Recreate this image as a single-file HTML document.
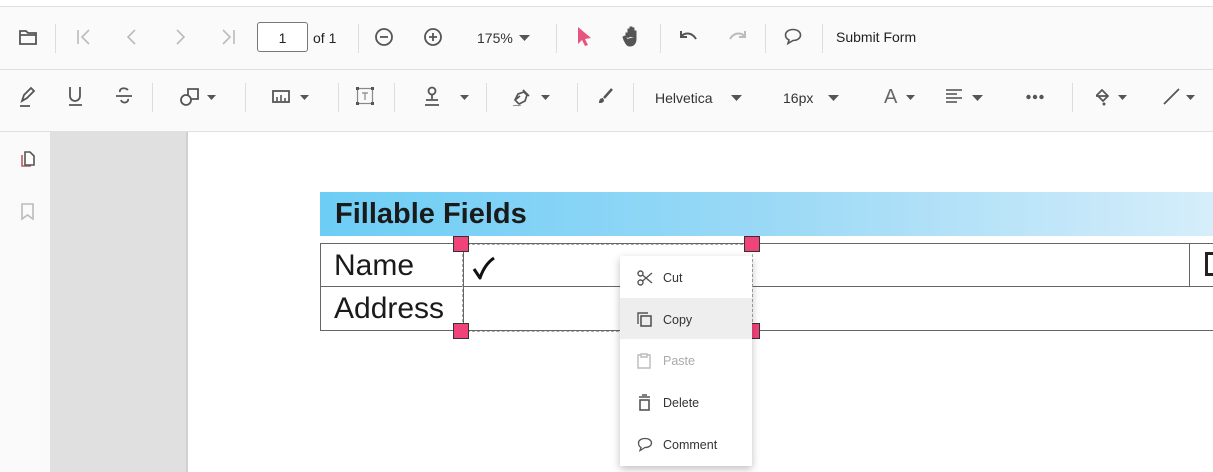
<!DOCTYPE html>
<html><head><style>
*{margin:0;padding:0;box-sizing:border-box}
body{width:1213px;height:472px;overflow:hidden;background:#fff;font-family:"Liberation Sans",sans-serif;position:relative}
.a{position:absolute}
.tb{background:#fafafa;left:0;width:1213px}
.sep{position:absolute;width:1px;background:#ddd}
.t{position:absolute;font-size:14px;color:#333}
svg{position:absolute;overflow:visible}
.mi{position:absolute;left:0;width:132px;height:41px;font-size:12.5px;color:#333}
.mi span{position:absolute;left:43px;top:15px}
</style></head><body>
<div class="a" style="top:0;left:0;width:1213px;height:6px;background:#fff"></div>
<div class="a tb" style="top:6px;height:64px;border-top:1px solid #e0e0e0;border-bottom:1px solid #e0e0e0"></div>
<div class="a tb" style="top:70px;height:62px;border-bottom:1px solid #e0e0e0"></div>
<!-- toolbar 1 -->
<svg style="left:18px;top:28px" width="20" height="18"><path d="M2 3h6l2 2h8v11H2z M2 7h16" fill="none" stroke="#555" stroke-width="1.8"/></svg>
<div class="sep" style="left:55px;top:24px;height:29px"></div>
<svg style="left:76px;top:29px" width="16" height="16"><path d="M2 1v14 M13 1l-7 7 7 7" fill="none" stroke="#bbb" stroke-width="1.6"/></svg>
<svg style="left:124px;top:29px" width="16" height="16"><path d="M11 1l-7 7 7 7" fill="none" stroke="#bbb" stroke-width="1.6"/></svg>
<svg style="left:172px;top:29px" width="16" height="16"><path d="M5 1l7 7-7 7" fill="none" stroke="#bbb" stroke-width="1.6"/></svg>
<svg style="left:220px;top:29px" width="16" height="16"><path d="M3 1l7 7-7 7 M14 1v14" fill="none" stroke="#bbb" stroke-width="1.6"/></svg>
<div class="a" style="left:257px;top:22px;width:51px;height:30px;border:1px solid #777;border-radius:3px;background:#fff;font-size:14px;text-align:center;line-height:30px;color:#222">1</div>
<div class="t" style="left:313px;top:30px;color:#222">of 1</div>
<div class="sep" style="left:358px;top:24px;height:29px"></div>
<svg style="left:374px;top:27px" width="20" height="20"><circle cx="10" cy="10" r="8" fill="none" stroke="#555" stroke-width="1.8"/><path d="M6 10h8" stroke="#555" stroke-width="1.8"/></svg>
<svg style="left:423px;top:27px" width="20" height="20"><circle cx="10" cy="10" r="8" fill="none" stroke="#555" stroke-width="1.8"/><path d="M6 10h8M10 6v8" stroke="#555" stroke-width="1.8"/></svg>
<div class="t" style="left:477px;top:30px">175%</div>
<svg style="left:519px;top:35px" width="12" height="7"><path d="M0 0h11l-5.5 6z" fill="#555"/></svg>
<div class="sep" style="left:556px;top:24px;height:29px"></div>
<svg style="left:577px;top:27px" width="16" height="20"><path d="M1 0l13 11-6 1 3 6-3 1-3-6-4 4z" fill="#e8547e"/></svg>
<svg style="left:623px;top:26px" width="20" height="22"><path d="M3 11v-4h2v5 M5 12V3h2v8 M7 11V1h2v10 M9 11V2h2v9 M11 11V5h2v8c0 5-3 7-6 7-3 0-4-2-6-6l-1-3 2-1 2 3" fill="#555" stroke="#555" stroke-width="1"/></svg>
<div class="sep" style="left:660px;top:24px;height:29px"></div>
<svg style="left:679px;top:30px" width="20" height="14"><path d="M2 1v6h6 M2 7c3-5 11-5 15 2" fill="none" stroke="#555" stroke-width="2"/></svg>
<svg style="left:727px;top:30px" width="20" height="14"><path d="M18 1v6h-6 M18 7c-3-5-11-5-15 2" fill="none" stroke="#bbb" stroke-width="2"/></svg>
<div class="sep" style="left:765px;top:24px;height:29px"></div>
<svg style="left:784px;top:28px" width="18" height="17"><path d="M9 1.5c4.5 0 7.5 2.5 7.5 5.5s-3 5.5-7.5 5.5l-5 3 1-3.5C3 11 1.5 9 1.5 7 1.5 4 4.5 1.5 9 1.5z" fill="none" stroke="#555" stroke-width="1.6"/></svg>
<div class="sep" style="left:822px;top:24px;height:29px"></div>
<div class="t" style="left:836px;top:29px;color:#222">Submit Form</div>
<!-- toolbar 2 -->
<svg style="left:19px;top:87px" width="18" height="20"><path d="M3 14l2-6 7-7 3 3-7 7z M1 19h10" fill="none" stroke="#555" stroke-width="1.8"/></svg>
<svg style="left:67px;top:86px" width="18" height="20"><path d="M3 1v9a5 5 0 0 0 10 0V1 M2 19h13" fill="none" stroke="#555" stroke-width="1.8"/></svg>
<svg style="left:115px;top:87px" width="18" height="20"><path d="M13 3C10 0 4 1 5 5 M1 9h16 M6 13c1 4 8 3 7-1" fill="none" stroke="#555" stroke-width="1.8"/></svg>
<div class="sep" style="left:152px;top:83px;height:29px"></div>
<svg style="left:180px;top:87px" width="20" height="20"><circle cx="6" cy="13" r="5" fill="none" stroke="#555" stroke-width="1.8"/><path d="M8 8V2h10v10h-7" fill="none" stroke="#555" stroke-width="1.8"/></svg>
<svg style="left:207px;top:95px" width="10" height="6"><path d="M0 0h9l-4.5 5z" fill="#555"/></svg>
<div class="sep" style="left:245px;top:83px;height:29px"></div>
<svg style="left:272px;top:90px" width="20" height="14"><rect x="1" y="1" width="16" height="11" fill="none" stroke="#555" stroke-width="1.8"/><path d="M5 11V7M9 11V5M13 11V8" stroke="#555" stroke-width="1.6"/></svg>
<svg style="left:300px;top:95px" width="10" height="6"><path d="M0 0h9l-4.5 5z" fill="#555"/></svg>
<div class="sep" style="left:338px;top:83px;height:29px"></div>
<svg style="left:356px;top:87px" width="20" height="20"><rect x="1.5" y="1.5" width="15" height="15" fill="none" stroke="#888" stroke-width="1.2"/><path d="M6 6h6M9 6v7" stroke="#888" stroke-width="1.2"/><g fill="#555"><rect x="0" y="0" width="3" height="3"/><rect x="15" y="0" width="3" height="3"/><rect x="0" y="15" width="3" height="3"/><rect x="15" y="15" width="3" height="3"/></g></svg>
<div class="sep" style="left:394px;top:83px;height:29px"></div>
<svg style="left:423px;top:86px" width="20" height="22"><circle cx="9" cy="5" r="3.5" fill="none" stroke="#555" stroke-width="1.8"/><path d="M9 9v4 M3 14h12 M2 19h14" fill="none" stroke="#555" stroke-width="1.8"/></svg>
<svg style="left:460px;top:95px" width="10" height="6"><path d="M0 0h9l-4.5 5z" fill="#555"/></svg>
<div class="sep" style="left:486px;top:83px;height:29px"></div>
<svg style="left:512px;top:88px" width="20" height="20"><path d="M3 12l3-6 6-2 3 3-2 6-6 3z M3 12l5-4 M11 2l6 6" fill="none" stroke="#555" stroke-width="1.7"/><path d="M1 18c3-2 5 1 8-1" fill="none" stroke="#888" stroke-width="1"/></svg>
<svg style="left:541px;top:95px" width="10" height="6"><path d="M0 0h9l-4.5 5z" fill="#555"/></svg>
<div class="sep" style="left:577px;top:83px;height:29px"></div>
<svg style="left:597px;top:88px" width="18" height="18"><path d="M15 1L7 10" stroke="#555" stroke-width="2.5"/><path d="M6 10c-3 0-4 2-4 5 2 0 5 0 5-3z" fill="#555"/></svg>
<div class="sep" style="left:633px;top:83px;height:29px"></div>
<div class="t" style="left:655px;top:90px;font-size:14px">Helvetica</div>
<svg style="left:731px;top:95px" width="12" height="7"><path d="M0 0h11l-5.5 6z" fill="#555"/></svg>
<div class="t" style="left:783px;top:90px">16px</div>
<svg style="left:828px;top:95px" width="12" height="7"><path d="M0 0h11l-5.5 6z" fill="#555"/></svg>
<div class="t" style="left:884px;top:86px;font-size:20px;color:#666">A</div>
<svg style="left:906px;top:95px" width="10" height="6"><path d="M0 0h9l-4.5 5z" fill="#555"/></svg>
<svg style="left:946px;top:89px" width="20" height="16"><path d="M0 1h16M0 5h11M0 9h16M0 13h11" stroke="#666" stroke-width="1.8"/></svg>
<svg style="left:972px;top:95px" width="12" height="7"><path d="M0 0h11l-5.5 6z" fill="#555"/></svg>
<svg style="left:1026px;top:94px" width="20" height="6"><circle cx="2.5" cy="3" r="2.2" fill="#555"/><circle cx="9" cy="3" r="2.2" fill="#555"/><circle cx="15.5" cy="3" r="2.2" fill="#555"/></svg>
<div class="sep" style="left:1072px;top:83px;height:29px"></div>
<svg style="left:1095px;top:88px" width="18" height="20"><path d="M7 2l6 6-5 5-6-6z M1 8h12" fill="none" stroke="#555" stroke-width="1.7"/><circle cx="9" cy="16" r="1.5" fill="#555"/></svg>
<svg style="left:1118px;top:95px" width="10" height="6"><path d="M0 0h9l-4.5 5z" fill="#555"/></svg>
<svg style="left:1163px;top:88px" width="18" height="18"><path d="M1 16L16 1" stroke="#555" stroke-width="1.8"/></svg>
<svg style="left:1186px;top:95px" width="10" height="6"><path d="M0 0h9l-4.5 5z" fill="#555"/></svg>
<!-- sidebar -->
<div class="a" style="left:0;top:132px;width:50px;height:340px;background:#fafafa"></div>
<div class="a" style="left:50px;top:132px;width:137px;height:340px;background:#e0e0e0"></div>
<div class="a" style="left:186px;top:132px;width:2px;height:340px;background:#d0d0d0"></div>
<svg style="left:19px;top:151px" width="18" height="20"><path d="M3 4v11h9" fill="none" stroke="#b06060" stroke-width="1.6"/><path d="M6 1h5l4 4v9H6z" fill="#fff" stroke="#555" stroke-width="1.6"/></svg>
<svg style="left:21px;top:203px" width="14" height="18"><path d="M1 1h11v15l-5.5-4-5.5 4z" fill="none" stroke="#bbb" stroke-width="1.6"/></svg>
<!-- page -->
<div class="a" style="left:320px;top:192px;width:893px;height:44px;background:linear-gradient(90deg,#6dcdf5 0%,#9ad9f6 50%,#c4e7f9 85%,#d5eefa 100%)"></div>
<div class="a" style="left:335px;top:198px;font-size:29px;font-weight:bold;color:#1a1a1a">Fillable Fields</div>
<div class="a" style="left:320px;top:243px;width:893px;height:88px;border-top:1px solid #666;border-bottom:1px solid #666;border-left:1px solid #666"></div>
<div class="a" style="left:320px;top:286px;width:893px;height:1px;background:#666"></div>
<div class="a" style="left:463px;top:243px;width:1px;height:88px;background:#666"></div>
<div class="a" style="left:1189px;top:243px;width:1px;height:44px;background:#666"></div>
<div class="a" style="left:1205px;top:252px;width:10px;height:24px;border:3px solid #222;border-right:none"></div>
<div class="a" style="left:334px;top:249px;font-size:30px;color:#1a1a1a">Name</div>
<div class="a" style="left:334px;top:292px;font-size:30px;color:#1a1a1a">Address</div>
<svg style="left:472px;top:257px" width="24" height="24"><path d="M2 12l6 9C11 12 16 5 22 1" fill="none" stroke="#111" stroke-width="3" stroke-linejoin="round"/></svg>
<div class="a" style="left:462px;top:244px;width:291px;height:88px;border:1px dashed #aaa"></div>
<div class="a" style="left:453px;top:236px;width:16px;height:16px;background:#f0437a;border:1px solid #333"></div>
<div class="a" style="left:744px;top:236px;width:16px;height:16px;background:#f0437a;border:1px solid #333"></div>
<div class="a" style="left:453px;top:323px;width:16px;height:16px;background:#f0437a;border:1px solid #333"></div>
<div class="a" style="left:744px;top:323px;width:16px;height:16px;background:#f0437a;border:1px solid #333"></div>
<!-- menu -->
<div class="a" style="left:620px;top:256px;width:132px;height:210px;background:#fff;box-shadow:0 3px 8px rgba(0,0,0,.25)">
<div class="mi" style="top:0"><svg style="left:17px;top:14px" width="16" height="16"><circle cx="3.5" cy="3.5" r="2.5" fill="none" stroke="#555" stroke-width="1.4"/><circle cx="3.5" cy="12.5" r="2.5" fill="none" stroke="#555" stroke-width="1.4"/><path d="M5.5 5L15 13M5.5 11L15 3" stroke="#555" stroke-width="1.4"/></svg><span>Cut</span></div>
<div class="mi" style="top:42px;background:#eee"><svg style="left:17px;top:14px" width="16" height="16"><path d="M1 12V1h10" fill="none" stroke="#555" stroke-width="1.4"/><rect x="4" y="4" width="10" height="10" fill="none" stroke="#555" stroke-width="1.6"/></svg><span>Copy</span></div>
<div class="mi" style="top:83px;color:#aaa"><svg style="left:17px;top:14px" width="16" height="16"><path d="M4 2H1v13h12V2h-3 M4 1h6v3H4z" fill="none" stroke="#bbb" stroke-width="1.4"/></svg><span>Paste</span></div>
<div class="mi" style="top:125px"><svg style="left:17px;top:14px" width="16" height="16"><path d="M2 2h11 M5 0h5" stroke="#555" stroke-width="1.4"/><rect x="3" y="5" width="9" height="10" fill="none" stroke="#555" stroke-width="1.6"/></svg><span>Delete</span></div>
<div class="mi" style="top:167px"><svg style="left:17px;top:14px" width="16" height="16"><path d="M8 1.5c4 0 6.5 2 6.5 4.5S12 10.5 8 10.5l-5 3 1-3C2 9.5 1.5 8 1.5 6 1.5 3.5 4 1.5 8 1.5z" fill="none" stroke="#555" stroke-width="1.3"/></svg><span>Comment</span></div>
</div>
</body></html>
